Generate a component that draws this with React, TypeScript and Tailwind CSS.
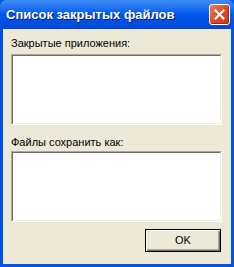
import React from 'react';

function CloseButton() {
  return (
    <div className="w-[21px] h-[21px] rounded-[3px] border border-white bg-gradient-to-br from-[#e87a5c] via-[#d9502e] to-[#c13a14] flex items-center justify-center shadow-[inset_-1px_-1px_0_#a12a08]">
      <svg width="11" height="11" viewBox="0 0 11 11">
        <path d="M1.5 1.5 L9.5 9.5 M9.5 1.5 L1.5 9.5" stroke="#fff" strokeWidth="2" strokeLinecap="square" />
      </svg>
    </div>
  );
}

function ListBox() {
  return (
    <div className="w-[211px] h-[71px] bg-white border border-t-[#aca899] border-l-[#aca899] border-b-white border-r-white">
      <div className="w-full h-full border border-t-[#716f64] border-l-[#716f64] border-b-[#f1efe2] border-r-[#f1efe2]" />
    </div>
  );
}

export default function App() {
  const ui = { fontFamily: '"Liberation Sans", Arial, sans-serif' };

  return (
    <div className="w-[234px] h-[267px] flex flex-col bg-[#0054e3] overflow-hidden" style={ui}>
      {/* title bar */}
      <div className="h-[29px] flex items-center justify-between pl-[6px] pr-[4px] bg-gradient-to-b from-[#3d8df5] via-[#0058ee] to-[#0047d6] rounded-t-[6px]">
        <span className="text-white font-bold text-[13px] leading-none [text-shadow:1px_1px_0_#0a1e7a]">
          Список закрытых файлов
        </span>
        <CloseButton />
      </div>

      {/* body */}
      <div className="flex-1 mx-[3px] mb-[3px] bg-[#ece9d8] flex flex-col pl-[8px] pt-[8px] text-[11px] text-black">
        <div className="h-[13px] leading-[13px]">Закрытые приложения:</div>
        <div className="mt-[4px]">
          <ListBox />
        </div>
        <div className="mt-[11px] h-[13px] leading-[13px]">Файлы сохранить как:</div>
        <div className="mt-[2px]">
          <ListBox />
        </div>
        <div className="mt-[7px] flex justify-end pr-[10px]">
          <button className="w-[76px] h-[23px] border border-black bg-[#ece9d8] text-[11px] leading-none shadow-[inset_1px_1px_0_#fff,inset_-1px_-1px_0_#716f64,inset_-2px_-2px_0_#aca899]">
            OK
          </button>
        </div>
      </div>
    </div>
  );
}
